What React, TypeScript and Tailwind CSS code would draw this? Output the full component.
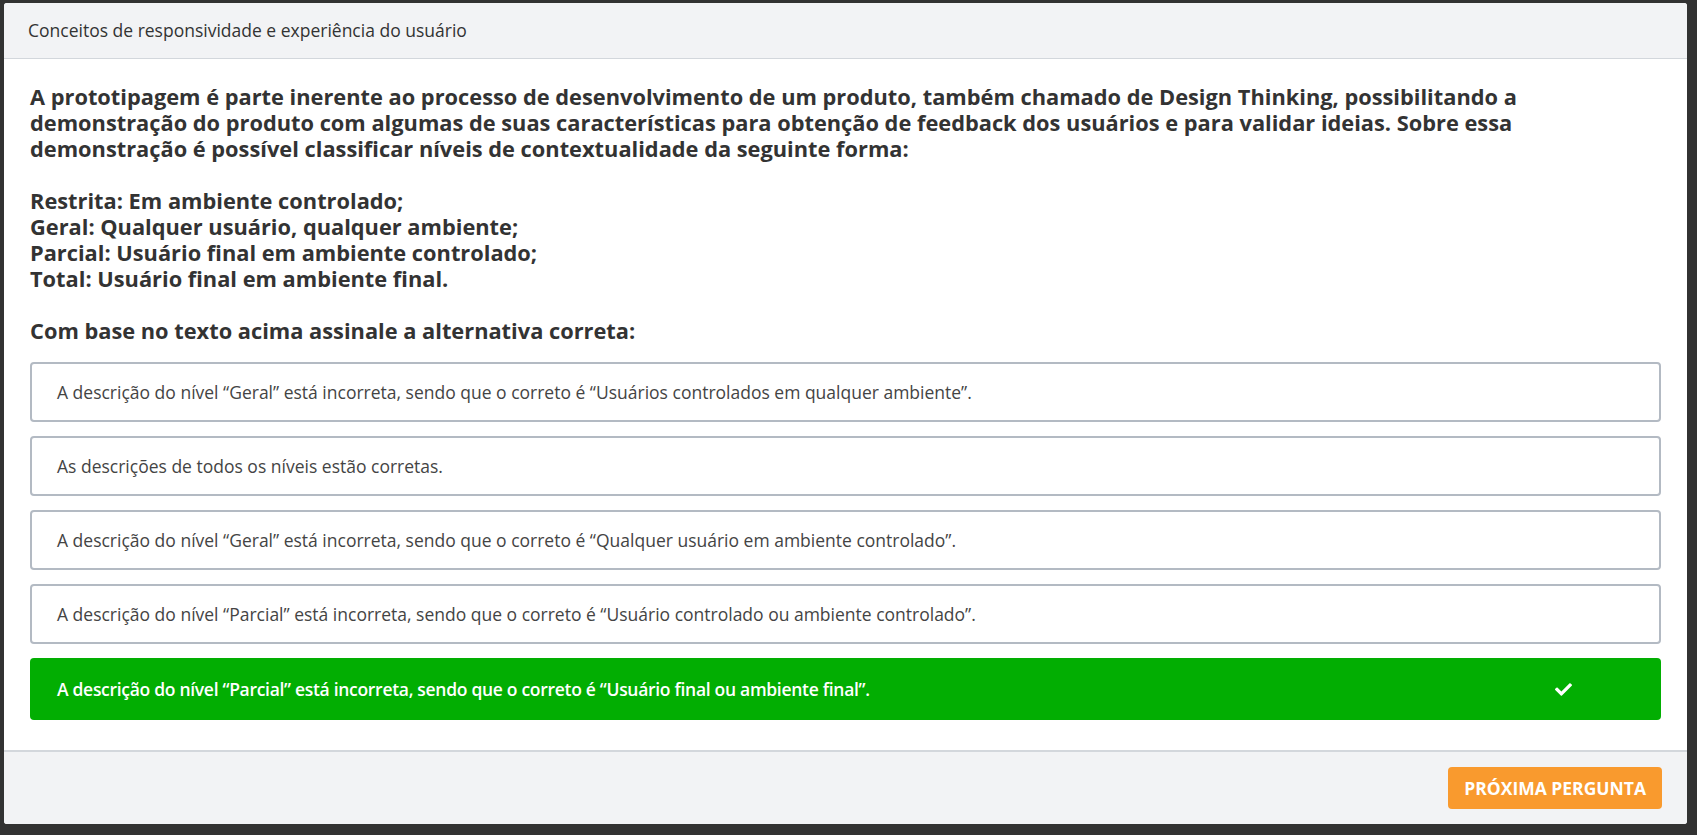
import { FaCheck } from 'react-icons/fa';

const options = [
  { text: 'A descrição do nível “Geral” está incorreta, sendo que o correto é “Usuários controlados em qualquer ambiente”.', correct: false },
  { text: 'As descrições de todos os níveis estão corretas.', correct: false },
  { text: 'A descrição do nível “Geral” está incorreta, sendo que o correto é “Qualquer usuário em ambiente controlado”.', correct: false },
  { text: 'A descrição do nível “Parcial” está incorreta, sendo que o correto é “Usuário controlado ou ambiente controlado”.', correct: false },
  { text: 'A descrição do nível “Parcial” está incorreta, sendo que o correto é “Usuário final ou ambiente final”.', correct: true },
];

const App = () => {
  return (
    <div className="h-screen bg-[#323232] pl-[4px] pt-[3px] pr-[10px] pb-[11px] font-['Open_Sans',sans-serif]">
      <div className="flex h-full flex-col overflow-hidden rounded-[3px] bg-white">
        <div className="flex h-[56px] items-center border-b border-[#d3d7dc] bg-[#f2f3f5] px-[24px]">
          <span className="text-[17.5px] text-[#333]">Conceitos de responsividade e experiência do usuário</span>
        </div>

        <div className="flex-1 px-[26px] pb-[30px] pt-[25px]">
          <p className="text-[21.8px] font-bold leading-[26px] text-[#333]">
            A prototipagem é parte inerente ao processo de desenvolvimento de um produto, também chamado de Design Thinking, possibilitando a demonstração do produto com algumas de suas características para obtenção de feedback dos usuários e para validar ideias. Sobre essa demonstração é possível classificar níveis de contextualidade da seguinte forma:
            <br />
            <br />
            Restrita: Em ambiente controlado;
            <br />
            Geral: Qualquer usuário, qualquer ambiente;
            <br />
            Parcial: Usuário final em ambiente controlado;
            <br />
            Total: Usuário final em ambiente final.
            <br />
            <br />
            Com base no texto acima assinale a alternativa correta:
          </p>

          <ul className="mt-[18px] flex flex-col gap-[14px]">
            {options.map((o, i) =>
              o.correct ? (
                <li
                  key={i}
                  className="flex h-[62px] items-center justify-between rounded-[4px] bg-[#02ae02] pl-[27px] pr-[89px] text-[17.5px] font-semibold tracking-[-0.3px] text-white"
                >
                  <span>{o.text}</span>
                  <FaCheck className="h-[17px] w-[17px]" />
                </li>
              ) : (
                <li
                  key={i}
                  className="flex h-[60px] items-center rounded-[4px] border-2 border-[#b3bac3] px-[25px] text-[17.5px] text-[#444]"
                >
                  {o.text}
                </li>
              )
            )}
          </ul>
        </div>

        <div className="flex h-[74px] items-center justify-end border-t-2 border-[#d3d7dc] bg-[#f2f3f5] px-[25px]">
          <button className="h-[42px] rounded-[4px] bg-[#f99a2e] px-[16px] text-[17.5px] font-bold text-white">
            PRÓXIMA PERGUNTA
          </button>
        </div>
      </div>
    </div>
  );
};

export default App;
